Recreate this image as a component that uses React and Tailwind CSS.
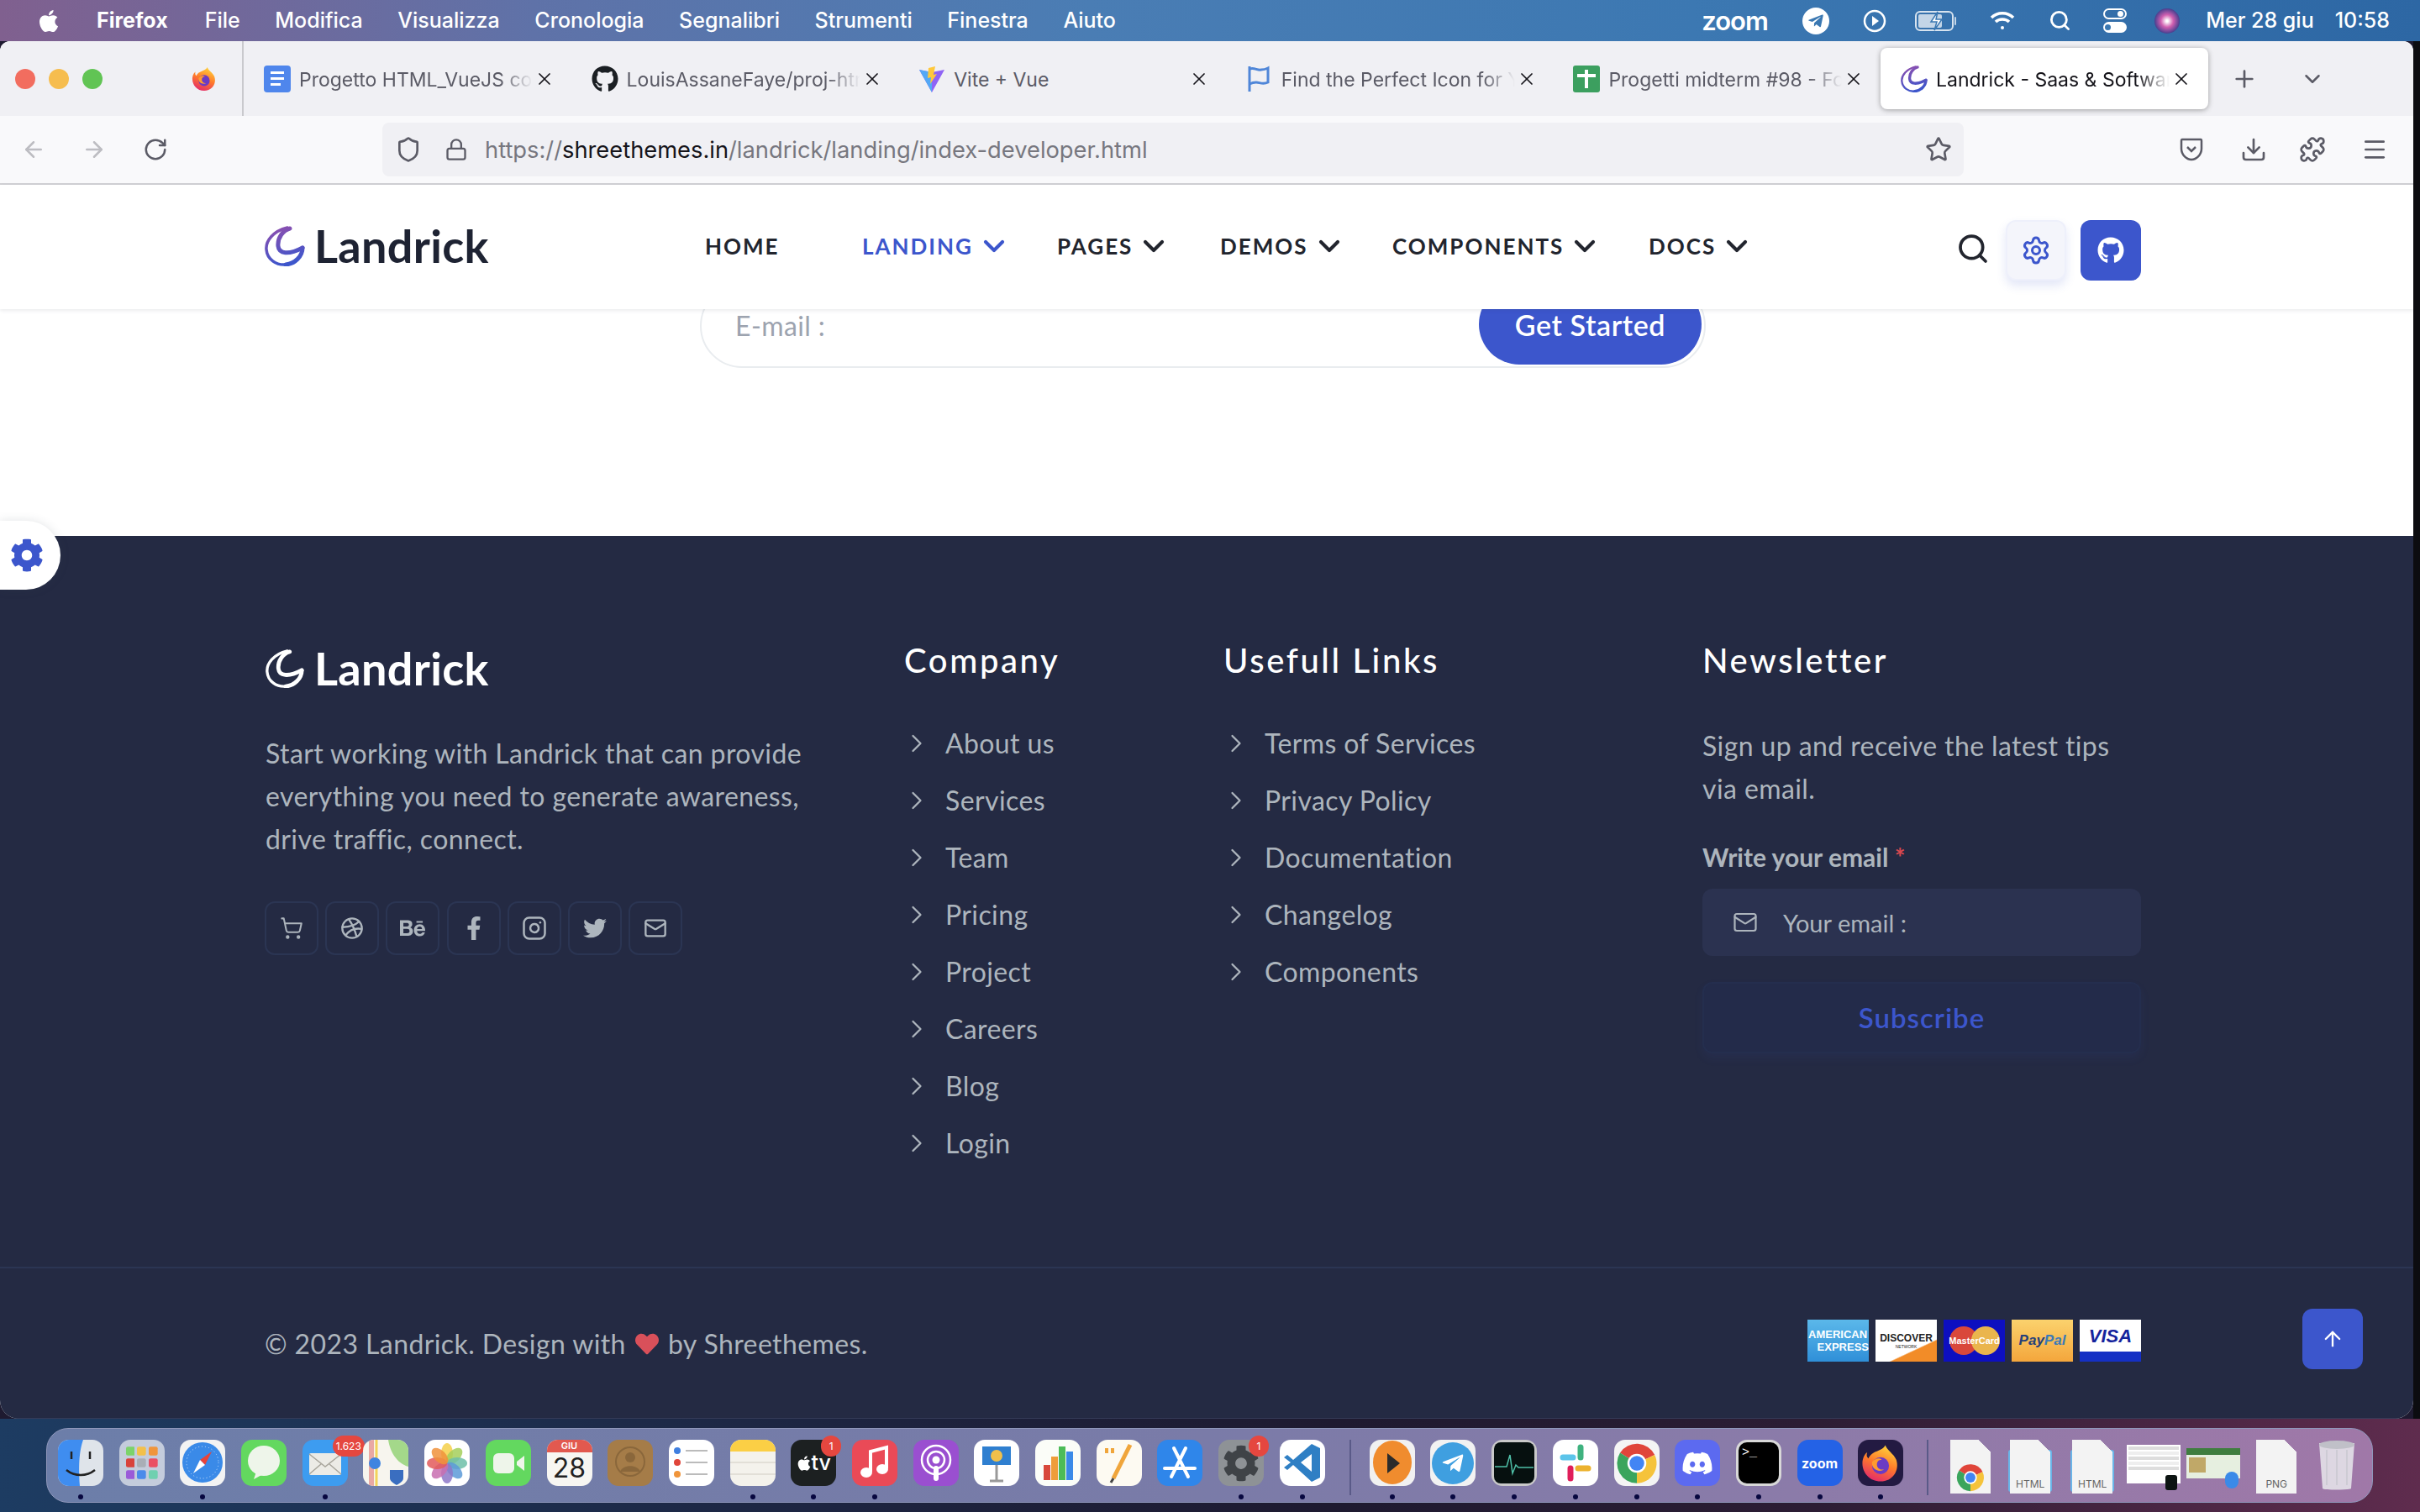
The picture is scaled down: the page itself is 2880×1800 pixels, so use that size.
import { ArrowUp, ChevronDown, ChevronRight, Menu, Plus, RotateCw, Search, Settings, ShoppingCart, X, ArrowLeft, ArrowRight, Star, Download, Puzzle, Lock, Shield, Mail, Instagram, Dribbble } from 'lucide-react';
import { FaApple, FaBehance, FaCog, FaDiscord, FaFacebookF, FaGithub, FaHeart, FaTelegramPlane, FaTwitter } from 'react-icons/fa';

const menus = ['File', 'Modifica', 'Visualizza', 'Cronologia', 'Segnalibri', 'Strumenti', 'Finestra', 'Aiuto'];

const nav = [
  { label: 'HOME', width: 'w-[187px]' },
  { label: 'LANDING', width: 'w-[232px]', active: true, caret: true },
  { label: 'PAGES', width: 'w-[194px]', caret: true },
  { label: 'DEMOS', width: 'w-[205px]', caret: true },
  { label: 'COMPONENTS', width: 'w-[305px]', caret: true },
  { label: 'DOCS', width: 'w-[140px]', caret: true },
];

const company = ['About us', 'Services', 'Team', 'Pricing', 'Project', 'Careers', 'Blog', 'Login'];
const usefull = ['Terms of Services', 'Privacy Policy', 'Documentation', 'Changelog', 'Components'];

function LandrickMark({ id, light, className }) {
  const stroke = light ? '#ffffff' : `url(#${id})`;
  return (
    <svg viewBox="0 0 48 48" className={className} fill="none">
      <defs>
        <linearGradient id={id} gradientUnits="userSpaceOnUse" x1="14" y1="2" x2="26" y2="46">
          <stop offset="0" stopColor="#8a4fb0" />
          <stop offset="1" stopColor="#3c56cc" />
        </linearGradient>
      </defs>
      <path d="M30 3c-8 2-15 11-14 21 1 9 12 11 29 2" stroke={stroke} strokeWidth="5" strokeLinecap="round" />
      <path d="M45 26c0 10-9 19-20 20" stroke={stroke} strokeWidth="5" strokeLinecap="round" />
      <path d="M27 2C10 6 1 18 2 28c1 12 12 19 23 18" stroke={stroke} strokeWidth="3.500" strokeLinecap="round" />
    </svg>
  );
}

function FirefoxIcon({ className }) {
  return (
    <svg viewBox="0 0 32 32" className={className}>
      <defs>
        <linearGradient id="ffx" x1="0.7" y1="0" x2="0.3" y2="1">
          <stop offset="0" stopColor="#ffd43b" />
          <stop offset="0.5" stopColor="#ff7a2a" />
          <stop offset="1" stopColor="#e3286d" />
        </linearGradient>
      </defs>
      <path d="M20 1c1 4 7 7 9 12 3 9-3 18-13 18C7 31 1 24 1 16c0-4 2-8 4-9-1 3 0 4 1 5 1-3 4-5 7-6 3-1 6-3 7-5z" fill="url(#ffx)" />
      <circle cx="16" cy="18" r="7" fill="#6b3bc4" />
      <path d="M9 15c2-3 6-4 8-2-3 0-4 2-4 4 0 3 3 5 6 4-4 3-11 0-10-6z" fill="#ff9b2e" />
    </svg>
  );
}

function TabIcon({ kind }) {
  if (kind === 'docs') {
    return (
      <div className="flex h-[32px] w-[32px] flex-col items-start justify-center gap-[4px] rounded-[4px] bg-[#4f86ec] pl-[8px]">
        <div className="h-[3px] w-[16px] bg-white" />
        <div className="h-[3px] w-[16px] bg-white" />
        <div className="h-[3px] w-[12px] bg-white" />
      </div>
    );
  }
  if (kind === 'github') return <FaGithub className="h-[32px] w-[32px] text-[#1b1f23]" />;
  if (kind === 'vite') {
    return (
      <svg viewBox="0 0 32 32" className="h-[32px] w-[32px]">
        <path d="M1 5l15 3 15-3-15 27z" fill="#8f63f5" />
        <path d="M1 5l15 3v24z" fill="#53a8f5" />
        <path d="M20 1l-8 2-1 12 4-1-1 8 8-12-4 1z" fill="#ffc83a" />
      </svg>
    );
  }
  if (kind === 'flag') {
    return (
      <svg viewBox="0 0 32 32" className="h-[32px] w-[32px]" fill="none" stroke="#4f86d8" strokeWidth="3">
        <path d="M4 1v30" />
        <path d="M4 4c6-2 9 2 14 1 3 0 6-1 8-2v17c-6 3-10 0-14 0-3 0-6 1-8 2" />
      </svg>
    );
  }
  if (kind === 'sheets') {
    return (
      <div className="flex h-[32px] w-[32px] items-center justify-center rounded-[3px] bg-[#3c9f5f]">
        <div className="relative h-[22px] w-[22px]">
          <div className="absolute left-[9px] top-0 h-full w-[4px] bg-white" />
          <div className="absolute left-0 top-[5px] h-[4px] w-full bg-white" />
        </div>
      </div>
    );
  }
  return <LandrickMark id="fav" className="h-[32px] w-[32px]" />;
}

const tabs = [
  { kind: 'docs', title: 'Progetto HTML_VueJS con Vue', fade: true },
  { kind: 'github', title: 'LouisAssaneFaye/proj-html-vue', fade: true },
  { kind: 'vite', title: 'Vite + Vue' },
  { kind: 'flag', title: 'Find the Perfect Icon for Your', fade: true },
  { kind: 'sheets', title: 'Progetti midterm #98 - Foglio', fade: true },
  { kind: 'landrick', title: 'Landrick - Saas & Software La', fade: true, active: true },
];

function MenuBar() {
  return (
    <div className="flex h-[49px] items-center bg-[linear-gradient(90deg,#80608f_0%,#5f72a8_22%,#4a7db4_45%,#3c78b2_70%,#2d67a4_100%)] font-['Inter',sans-serif] text-[25px] font-medium text-white">
      <FaApple className="ml-[44px] h-[30px] w-[28px]" />
      <span className="ml-[43px] font-bold">Firefox</span>
      <div className="ml-[44px] flex gap-[41.6px]">
        {menus.map((m) => (
          <span key={m}>{m}</span>
        ))}
      </div>
      <div className="ml-auto flex items-center">
        <span className="w-[84px] text-[31px] leading-none font-semibold tracking-[-1px]">zoom</span>
        <div className="ml-[36px] flex h-[32px] w-[32px] items-center justify-center rounded-full bg-white text-[#3b78b2]">
          <FaTelegramPlane className="h-[20px] w-[20px]" />
        </div>
        <svg viewBox="0 0 28 28" className="ml-[40px] h-[28px] w-[28px]" fill="none" stroke="white" strokeWidth="2.500">
          <circle cx="14" cy="14" r="12" />
          <path d="M11 8l8 6-8 6z" fill="white" stroke="none" />
        </svg>
        <svg viewBox="0 0 52 26" className="ml-[34px] h-[26px] w-[52px]" fill="none" stroke="white" strokeWidth="2">
          <rect x="1" y="2" width="44" height="22" rx="5" opacity="0.8" />
          <rect x="4" y="5" width="28" height="16" rx="2" fill="white" stroke="none" opacity="0.7" />
          <path d="M27 2l-8 12h7l-3 10 9-13h-7z" fill="white" stroke="#3b78b2" strokeWidth="1.500" />
          <path d="M48 9v8" strokeLinecap="round" opacity="0.7" />
        </svg>
        <svg viewBox="0 0 30 24" className="ml-[37px] h-[24px] w-[30px]" fill="none" stroke="white" strokeWidth="3.500">
          <path d="M2 8c7-7 19-7 26 0" />
          <path d="M7 13c4-4 12-4 16 0" />
          <circle cx="15" cy="20" r="2" fill="white" stroke="none" />
        </svg>
        <Search className="ml-[40px] h-[27px] w-[27px]" strokeWidth={2.5} />
        <div className="ml-[38px] flex w-[28px] flex-col gap-[3px]">
          <div className="flex h-[13px] items-center justify-end rounded-full border-2 border-white px-[2px]"><div className="h-[7px] w-[7px] rounded-full bg-white" /></div>
          <div className="flex h-[13px] items-center rounded-full bg-white px-[2px]"><div className="h-[7px] w-[7px] rounded-full bg-[#3b78b2]" /></div>
        </div>
        <div className="ml-[33px] flex h-[30px] w-[30px] items-center justify-center rounded-full bg-[radial-gradient(circle,#ffffff_5%,#d05fb0_35%,#4a3f8f_70%,#1d2a50_100%)]" />
        <span className="ml-[31px] whitespace-nowrap">Mer 28 giu</span>
        <span className="ml-[25px] mr-[36px] whitespace-nowrap">10:58</span>
      </div>
    </div>
  );
}

function TabBar() {
  return (
    <div className="flex h-[89px] items-center bg-[#f0f0f4] font-['Inter',sans-serif] text-[23px]">
      <div className="flex h-full w-[290px] shrink-0 items-center border-r-2 border-[#c9c9cd] pl-[18px]">
        <div className="h-[24px] w-[24px] rounded-full bg-[#f26d5f]" />
        <div className="ml-[16px] h-[24px] w-[24px] rounded-full bg-[#f6bd4f]" />
        <div className="ml-[16px] h-[24px] w-[24px] rounded-full bg-[#61c454]" />
        <FirefoxIcon className="ml-[106px] h-[32px] w-[30px]" />
      </div>
      {tabs.map((tab) => (
        <div key={tab.title} className="w-[389.6px] shrink-0">
          <div className={`flex h-[73px] items-center rounded-[8px] pl-[16px] ${tab.active ? 'bg-white shadow-[0_1px_6px_rgba(0,0,0,0.35)] text-[#15141a]' : 'text-[#5b5b66]'}`}>
            <div className="ml-[8px] shrink-0"><TabIcon kind={tab.kind} /></div>
            <div className={`ml-[10px] w-[278px] overflow-hidden pt-[4px] whitespace-nowrap ${tab.fade ? '[mask-image:linear-gradient(to_right,black_86%,transparent)]' : ''}`}>
              {tab.title}
            </div>
            <X className="ml-[2px] h-[24px] w-[24px] shrink-0 text-[#15141a]" strokeWidth={1.75} />
          </div>
        </div>
      ))}
      <Plus className="ml-[27px] h-[32px] w-[32px] text-[#5b5b66]" strokeWidth={2} />
      <ChevronDown className="ml-[50px] h-[30px] w-[30px] text-[#5b5b66]" strokeWidth={2} />
    </div>
  );
}

function Toolbar() {
  return (
    <div className="flex h-[82px] items-center border-b-2 border-[#d0d0d4] bg-[#f9f9fb] text-[#5b5b66]">
      <ArrowLeft className="ml-[25px] h-[30px] w-[30px] text-[#bdbdc2]" strokeWidth={2} />
      <ArrowRight className="ml-[42px] h-[30px] w-[30px] text-[#bdbdc2]" strokeWidth={2} />
      <RotateCw className="ml-[43px] h-[30px] w-[30px]" strokeWidth={2} />
      <div className="ml-[255px] flex h-[64px] w-[1882px] items-center rounded-[8px] bg-[#f0f0f4]">
        <Shield className="ml-[15px] h-[32px] w-[32px]" strokeWidth={2} />
        <Lock className="ml-[27px] h-[32px] w-[28px]" strokeWidth={2} />
        <div className="ml-[20px] pt-[2px] font-['Inter',sans-serif] text-[27.3px] whitespace-nowrap text-[#77777f]">
          https://<span className="text-[#15141a]">shreethemes.in</span>/landrick/landing/index-developer.html
        </div>
        <Star className="ml-auto mr-[14px] h-[32px] w-[32px]" strokeWidth={2} />
      </div>
      <svg viewBox="0 0 28 30" className="ml-[257px] h-[30px] w-[28px]" fill="none" stroke="#5b5b66" strokeWidth="2.500">
        <path d="M3 3h22c1 0 1 1 1 2v9c0 7-6 13-12 13S2 21 2 14V5c0-1 0-2 1-2z" />
        <path d="M9 12l5 5 5-5" />
      </svg>
      <Download className="ml-[44px] h-[32px] w-[32px]" strokeWidth={2} />
      <Puzzle className="ml-[38px] h-[32px] w-[32px]" strokeWidth={2} />
      <Menu className="ml-[42px] h-[32px] w-[32px]" strokeWidth={2} />
    </div>
  );
}

function SiteHeader() {
  return (
    <div className="relative z-10 flex h-[148px] items-center bg-white pl-[315px] shadow-[0_2px_4px_rgba(60,72,88,0.1)] font-['Lato',sans-serif]">
      <div className="-mt-[2px] flex w-[524px] items-center">
        <LandrickMark id="logoDark" className="h-[48px] w-[48px]" />
        <span className="ml-[11px] text-[54px] leading-none font-bold tracking-[0.3px] text-[#1e2333]">Landrick</span>
      </div>
      {nav.map((item) => (
        <div key={item.label} className={`-mt-[2px] flex items-center ${item.width} text-[26px] font-bold tracking-[2px] ${item.active ? 'text-[#3c56cc]' : 'text-[#22252e]'}`}>
          <span>{item.label}</span>
          {item.caret && <ChevronDown className="ml-[5px] h-[40px] w-[40px]" strokeWidth={2.5} />}
        </div>
      ))}
      <Search className="ml-[226px] mt-[4px] h-[40px] w-[40px] text-[#22252e]" strokeWidth={2.25} />
      <div className="ml-[19px] mt-[7px] flex h-[72px] w-[72px] items-center justify-center rounded-[12px] border-2 border-[#eef0fb] bg-[#f4f5fb] shadow-[0_6px_12px_rgba(60,86,204,0.15)]">
        <Settings className="h-[36px] w-[36px] text-[#3c56cc]" strokeWidth={2} />
      </div>
      <div className="ml-[17px] mt-[7px] flex h-[72px] w-[72px] items-center justify-center rounded-[12px] bg-[#3c56cc]">
        <FaGithub className="h-[32px] w-[32px] text-white" />
      </div>
    </div>
  );
}

function LinkColumn({ title, links, width }) {
  return (
    <div className={width}>
      <h5 className="h-[56px] text-[40px] leading-[56px] font-medium tracking-[2.6px] text-white">{title}</h5>
      <ul className="mt-[37px]">
        {links.map((link) => (
          <li key={link} className="flex h-[68px] items-center text-[32px] tracking-[0.4px] text-[#adb5bd]">
            <ChevronRight className="-ml-[3px] h-[36px] w-[36px]" strokeWidth={1.5} />
            <span className="ml-[16px]">{link}</span>
          </li>
        ))}
      </ul>
    </div>
  );
}

function SocialButton({ children }) {
  return (
    <div className="flex h-[64px] w-[64px] items-center justify-center rounded-[12px] border-2 border-[#2b3553] text-[#adb5bd]">
      {children}
    </div>
  );
}

function PaymentCards() {
  return (
    <div className="flex gap-[8px] font-['Liberation_Sans',sans-serif]">
      <div className="flex h-[50px] w-[73px] flex-col justify-center bg-[linear-gradient(180deg,#5bb8ea,#2f8fd8)] text-[13px] leading-[15px] font-bold text-white">
        <span className="pl-[1px]">AMERICAN</span>
        <span className="text-right">EXPRESS</span>
      </div>
      <div className="flex h-[50px] w-[73px] flex-col items-center justify-center bg-[linear-gradient(155deg,#ffffff_68%,#f28c28_70%)] text-[12px] leading-[14px] font-bold text-[#222]">
        <span>DISCOVER</span>
        <span className="text-[5px] leading-[6px] font-normal">NETWORK</span>
      </div>
      <div className="relative flex h-[50px] w-[73px] items-center justify-center bg-[#0d0fc0]">
        <div className="h-[34px] w-[34px] rounded-full bg-[#d9483b]" />
        <div className="-ml-[8px] h-[34px] w-[34px] rounded-full bg-[#eab54d]" />
        <span className="absolute text-[11px] font-bold text-white">MasterCard</span>
      </div>
      <div className="flex h-[50px] w-[73px] items-center justify-center bg-[linear-gradient(180deg,#fbd26d,#f4a63c)] text-[17px] font-bold italic">
        <span className="text-[#25407a]">Pay</span><span className="text-[#3a7ab8]">Pal</span>
      </div>
      <div className="flex h-[50px] w-[73px] flex-col overflow-hidden bg-white">
        <span className="flex h-[38px] items-center justify-center text-[22px] font-bold italic text-[#15249c]">VISA</span>
        <div className="h-[12px] bg-[#1530c4]" />
      </div>
    </div>
  );
}

function Footer() {
  return (
    <div className="relative h-[1052px] border-b-2 border-[#353b58] bg-[#242a43] font-['Lato',sans-serif]">
      <div className="flex h-[870px] pl-[315px] pt-[120px]">
        <div className="w-[761px]">
          <div className="mt-[11px] flex items-center">
            <LandrickMark id="logoLight" light className="h-[46px] w-[48px]" />
            <span className="ml-[11px] text-[54px] leading-none font-bold tracking-[0.3px] text-white">Landrick</span>
          </div>
          <p className="mt-[48px] w-[660px] pl-[1px] text-[32px] leading-[51.2px] tracking-[0.4px] text-[#adb5bd]">
            Start working with Landrick that can provide everything you need to generate awareness, drive traffic, connect.
          </p>
          <div className="mt-[48px] flex gap-[8.2px]">
            <SocialButton><ShoppingCart className="h-[28px] w-[28px]" strokeWidth={1.75} /></SocialButton>
            <SocialButton><Dribbble className="h-[28px] w-[28px]" strokeWidth={2} /></SocialButton>
            <SocialButton><FaBehance className="h-[28px] w-[30px]" /></SocialButton>
            <SocialButton><FaFacebookF className="h-[28px] w-[28px]" /></SocialButton>
            <SocialButton><Instagram className="h-[30px] w-[30px]" strokeWidth={2} /></SocialButton>
            <SocialButton><FaTwitter className="h-[28px] w-[28px]" /></SocialButton>
            <SocialButton><Mail className="h-[28px] w-[28px]" strokeWidth={2} /></SocialButton>
          </div>
        </div>
        <LinkColumn title="Company" links={company} width="w-[380px]" />
        <LinkColumn title="Usefull Links" links={usefull} width="w-[570px]" />
        <div className="w-[522px]">
          <h5 className="h-[56px] text-[40px] leading-[56px] font-medium tracking-[2.6px] text-white">Newsletter</h5>
          <p className="mt-[48px] w-[500px] text-[32px] leading-[51.2px] tracking-[0.4px] text-[#adb5bd]">Sign up and receive the latest tips via email.</p>
          <div className="mt-[35px] text-[30px] leading-[42px] font-bold text-[#adb5bd]">
            Write your email <span className="text-[#d9484f]">*</span>
          </div>
          <div className="mt-[17px] flex h-[80px] items-center rounded-[12px] bg-[#2b3250] text-[29px] text-[#adb5bd]">
            <Mail className="ml-[36px] h-[30px] w-[30px]" strokeWidth={1.75} />
            <span className="ml-[30px]">Your email :</span>
          </div>
          <div className="mt-[31px] flex h-[85px] items-center justify-center rounded-[12px] border-2 border-[#242e4e] bg-[#232b4a] text-[33px] font-semibold tracking-[1px] text-[#3c56cc] shadow-[0_6px_12px_rgba(60,86,204,0.08)]">
            Subscribe
          </div>
        </div>
      </div>
      <div className="flex h-[182px] items-center justify-between border-t-2 border-[#2b3553] pl-[315px] pr-[324px]">
        <div className="flex items-center text-[32px] tracking-[0.4px] text-[#adb5bd]">
          © 2023 Landrick. Design with <FaHeart className="mx-[11px] h-[28px] w-[28px] text-[#d9505a]" /> by Shreethemes.
        </div>
        <div className="-mt-[8px]"><PaymentCards /></div>
      </div>
      <div className="absolute bottom-[58px] right-[60px] flex h-[72px] w-[72px] items-center justify-center rounded-[12px] bg-[#3c56cc]">
        <ArrowUp className="h-[28px] w-[28px] text-white" strokeWidth={2} />
      </div>
    </div>
  );
}

const box = 'relative h-[55px] w-[54px] overflow-hidden rounded-[13px]';

function Finder() {
  return (
    <svg viewBox="0 0 54 55" className={box}>
      <rect width="54" height="55" fill="#dfe4ea" />
      <path d="M0 0h30c-4 12-6 26-4 55H0z" fill="#3f8df0" />
      <path d="M16 14v9M38 14v9" stroke="#222" strokeWidth="2.500" />
      <path d="M10 36c10 8 24 8 34 0" stroke="#222" strokeWidth="2.500" fill="none" />
    </svg>
  );
}

function Launchpad() {
  const colors = ['#7cd36b', '#f3c04b', '#f0953b', '#d8423c', '#a9aeb6', '#ea4f63', '#9a5bd8', '#4b8bea', '#6fd0b0'];
  return (
    <div className={`${box} grid grid-cols-3 gap-[3px] bg-[#c4ccdc] p-[8px]`}>
      {colors.map((c, i) => (
        <svg key={i} viewBox="0 0 10 10" className="h-full w-full"><rect width="10" height="10" rx="2" fill={c} /></svg>
      ))}
    </div>
  );
}

function Petals() {
  const colors = ['#f5d04a', '#a4cf5a', '#6fc0a8', '#5c9ad8', '#8d78c8', '#c86fb0', '#e35b5b', '#f0923b'];
  return (
    <svg viewBox="0 0 54 55" className={box}>
      <rect width="54" height="55" fill="#ffffff" />
      {colors.map((c, i) => (
        <ellipse key={c} cx="27" cy="16" rx="7" ry="12" fill={c} opacity="0.85" transform={`rotate(${i * 45} 27 28)`} />
      ))}
    </svg>
  );
}

function Chrome({ size = 'h-[40px] w-[40px]' }) {
  return (
    <svg viewBox="0 0 40 40" className={size}>
      <path d="M20 20L4 10a19 19 0 0 1 33 2z" fill="#e0453a" />
      <path d="M20 20L37 12a19 19 0 0 1-17 27z" fill="#f5c33b" />
      <path d="M20 20v19A19 19 0 0 1 4 10z" fill="#3ba55d" />
      <circle cx="20" cy="20" r="9" fill="#fff" />
      <circle cx="20" cy="20" r="7" fill="#4285f4" />
    </svg>
  );
}

const icons = {
  finder: <Finder />,
  launchpad: <Launchpad />,
  safari: (
    <svg viewBox="0 0 54 55" className={box}>
      <rect width="54" height="55" fill="#f3f3f3" />
      <circle cx="27" cy="27" r="24" fill="#3a8ae8" />
      <circle cx="27" cy="27" r="19" fill="none" stroke="#cfe3fa" strokeWidth="1" strokeDasharray="1 3" />
      <path d="M38 14L24 24l6 6z" fill="#e8433a" />
      <path d="M16 40l8-16 6 6z" fill="#fff" />
    </svg>
  ),
  messages: (
    <svg viewBox="0 0 54 55" className={box}>
      <rect width="54" height="55" fill="#63d85f" />
      <ellipse cx="27" cy="25" rx="19" ry="18" fill="#eef5ea" />
      <path d="M18 38l-3 9 11-6z" fill="#eef5ea" />
    </svg>
  ),
  mail: (
    <svg viewBox="0 0 54 55" className={box}>
      <rect width="54" height="55" fill="#3d9cf0" />
      <rect x="8" y="16" width="38" height="26" rx="2" fill="#ecebe6" />
      <path d="M8 17l19 15 19-15M8 41l14-12M46 41L32 29" stroke="#a8a59c" strokeWidth="1.500" fill="none" />
    </svg>
  ),
  maps: (
    <svg viewBox="0 0 54 55" className={box}>
      <rect width="54" height="55" fill="#f7f5ee" />
      <path d="M30 0h24v32C40 28 32 14 30 0z" fill="#a4d88a" />
      <path d="M10 0v55" stroke="#e9a9a4" strokeWidth="6" />
      <path d="M16 0v55" stroke="#f3d35a" strokeWidth="3" />
      <circle cx="14" cy="28" r="7" fill="#3f84e0" />
      <path d="M32 36h16v10c0 4-8 8-8 8s-8-4-8-8z" fill="#3a6ec0" />
    </svg>
  ),
  photos: <Petals />,
  facetime: (
    <svg viewBox="0 0 54 55" className={box}>
      <rect width="54" height="55" fill="#63d85f" />
      <rect x="9" y="16" width="25" height="24" rx="6" fill="#eef5ea" />
      <path d="M37 26l9-7v18l-9-7z" fill="#eef5ea" />
    </svg>
  ),
  calendar: (
    <div className={`${box} flex flex-col items-center bg-[#f7f6f2] font-['Inter',sans-serif]`}>
      <div className="flex h-[15px] w-full items-center justify-center bg-[#e2594f] text-[11px] font-semibold text-white">GIU</div>
      <div className="text-[32px] leading-[38px] text-[#222]">28</div>
    </div>
  ),
  contacts: (
    <svg viewBox="0 0 54 55" className={box}>
      <rect width="54" height="55" fill="#a57c48" />
      <circle cx="27" cy="26" r="17" fill="none" stroke="#8a673b" strokeWidth="2" />
      <circle cx="27" cy="21" r="6" fill="#8a673b" />
      <path d="M15 38c3-9 21-9 24 0" fill="#8a673b" />
    </svg>
  ),
  reminders: (
    <svg viewBox="0 0 54 55" className={box}>
      <rect width="54" height="55" fill="#fff" />
      <circle cx="10" cy="13" r="4" fill="#3f7fe0" />
      <circle cx="10" cy="27" r="4" fill="#e0453a" />
      <circle cx="10" cy="41" r="4" fill="#f0953b" />
      <path d="M20 13h26M20 27h26M20 41h26" stroke="#bbb" strokeWidth="2" />
    </svg>
  ),
  notes: (
    <svg viewBox="0 0 54 55" className={box}>
      <rect width="54" height="55" fill="#f4f2ec" />
      <rect width="54" height="14" fill="#fbcf45" />
      <path d="M0 27h54M0 41h54" stroke="#dcd9d0" strokeWidth="1.500" />
    </svg>
  ),
  tv: (
    <div className={`${box} flex items-center justify-center bg-[#1c2021] font-['Inter',sans-serif] text-[25px] font-medium text-white`}>
      <FaApple className="h-[20px] w-[18px]" />
      <span>tv</span>
    </div>
  ),
  music: (
    <svg viewBox="0 0 54 55" className={box}>
      <rect width="54" height="55" fill="#ea4a57" />
      <path d="M22 38V14l19-5v25" fill="none" stroke="#fff" strokeWidth="4" />
      <ellipse cx="17" cy="39" rx="7" ry="6" fill="#fff" />
      <ellipse cx="36" cy="35" rx="7" ry="6" fill="#fff" />
    </svg>
  ),
  podcasts: (
    <svg viewBox="0 0 54 55" className={box}>
      <rect width="54" height="55" fill="#9a4fd0" />
      <circle cx="27" cy="24" r="17" fill="none" stroke="#fff" strokeWidth="2.500" />
      <circle cx="27" cy="24" r="10" fill="none" stroke="#fff" strokeWidth="2.500" />
      <circle cx="27" cy="24" r="4.500" fill="#fff" />
      <rect x="24" y="31" width="6" height="18" rx="3" fill="#fff" />
    </svg>
  ),
  keynote: (
    <svg viewBox="0 0 54 55" className={box}>
      <rect width="54" height="55" fill="#fff" />
      <rect x="10" y="8" width="34" height="22" fill="#2f7fd0" />
      <circle cx="27" cy="19" r="7" fill="#f0c04b" />
      <path d="M27 30v18M19 49h16" stroke="#999" strokeWidth="3" />
    </svg>
  ),
  numbers: (
    <svg viewBox="0 0 54 55" className={box}>
      <rect width="54" height="55" fill="#fbfdf8" />
      <rect x="10" y="30" width="8" height="18" fill="#d8483b" />
      <rect x="19" y="20" width="8" height="28" fill="#ef9d3a" />
      <rect x="28" y="8" width="8" height="40" fill="#4cbc58" />
      <rect x="37" y="14" width="8" height="34" fill="#3a8ae8" />
    </svg>
  ),
  pages: (
    <svg viewBox="0 0 54 55" className={box}>
      <rect width="54" height="55" fill="#fdfaf2" />
      <path d="M40 6L20 46" stroke="#f0a53b" strokeWidth="5" />
      <path d="M20 46l-3 5" stroke="#444" strokeWidth="3" />
      <path d="M10 10h4v6h-4zM17 10h4v6h-4z" fill="#f0a53b" />
    </svg>
  ),
  appstore: (
    <svg viewBox="0 0 54 55" className={box}>
      <rect width="54" height="55" fill="#2f86ea" />
      <path d="M34 10L17 44M20 10l17 34M9 34h36" stroke="#fff" strokeWidth="4" strokeLinecap="round" />
    </svg>
  ),
  prefs: (
    <div className={`${box} flex items-center justify-center bg-[#8e9296]`}>
      <FaCog className="h-[44px] w-[44px] text-[#3f4347]" />
    </div>
  ),
  vscode: (
    <svg viewBox="0 0 54 55" className={box}>
      <rect width="54" height="55" fill="#fff" />
      <path d="M38 5l10 5v35l-10 5L16 30l-7 6-4-3 8-6-8-6 4-3 7 6z" fill="#2f7fc4" />
      <path d="M38 17L25 27l13 11z" fill="#fff" />
    </svg>
  ),
  player: (
    <svg viewBox="0 0 54 55" className={box}>
      <rect width="54" height="55" fill="#f1f1f1" />
      <ellipse cx="27" cy="27" rx="23" ry="26" fill="#f08c2e" />
      <path d="M21 16l15 12-15 12z" fill="#2b2b2b" />
    </svg>
  ),
  telegram: (
    <div className={`${box} flex items-center justify-center bg-[#f2f2f2]`}>
      <div className="flex h-[50px] w-[50px] items-center justify-center rounded-full bg-[#3f9fe0]">
        <FaTelegramPlane className="h-[28px] w-[28px] text-white" />
      </div>
    </div>
  ),
  activity: (
    <svg viewBox="0 0 54 55" className={box}>
      <rect width="54" height="55" fill="#c9c9c9" />
      <rect x="3" y="3" width="48" height="49" rx="8" fill="#06100f" />
      <path d="M4 32h14l4-14 3 22 4-10 3 3h18" stroke="#4fc0a8" strokeWidth="1.500" fill="none" />
    </svg>
  ),
  slack: (
    <svg viewBox="0 0 54 55" className={box}>
      <rect width="54" height="55" fill="#fff" />
      <path d="M12 21h12" stroke="#5cc4ea" strokeWidth="7" strokeLinecap="round" />
      <path d="M33 9v12" stroke="#3fb27f" strokeWidth="7" strokeLinecap="round" />
      <path d="M30 34h12" stroke="#ecb22e" strokeWidth="7" strokeLinecap="round" />
      <path d="M21 34v12" stroke="#e01e5a" strokeWidth="7" strokeLinecap="round" />
    </svg>
  ),
  chrome: (
    <div className={`${box} flex items-center justify-center bg-[#f4f4f4]`}><Chrome size="h-[50px] w-[50px]" /></div>
  ),
  discord: (
    <div className={`${box} flex items-center justify-center bg-[#5c6af0]`}>
      <FaDiscord className="h-[38px] w-[38px] text-white" />
    </div>
  ),
  terminal: (
    <div className={`${box} border-[3px] border-[#d8d8d8] bg-black p-[4px] font-['Liberation_Mono',monospace] text-[15px] leading-[18px] text-white`}>
      &gt;_
    </div>
  ),
  zoom: (
    <div className={`${box} flex items-center justify-center bg-[#2462e6] font-['Inter',sans-serif] text-[16px] font-bold text-white`}>zoom</div>
  ),
  firefox: (
    <div className={`${box} flex items-center justify-center bg-[#231a42]`}><FirefoxIcon className="h-[46px] w-[46px]" /></div>
  ),
};

const dockFirst = [
  { id: 'finder', on: true }, { id: 'launchpad' }, { id: 'safari', on: true }, { id: 'messages' },
  { id: 'mail', on: true, badge: '1.623' }, { id: 'maps' }, { id: 'photos' }, { id: 'facetime' },
  { id: 'calendar' }, { id: 'contacts' }, { id: 'reminders' }, { id: 'notes', on: true },
  { id: 'tv', on: true, badge: '1' }, { id: 'music', on: true }, { id: 'podcasts' }, { id: 'keynote' },
  { id: 'numbers' }, { id: 'pages' }, { id: 'appstore' }, { id: 'prefs', on: true, badge: '1' }, { id: 'vscode', on: true },
];
const dockSecond = ['player', 'telegram', 'activity', 'slack', 'chrome', 'discord', 'terminal', 'zoom', 'firefox'];

function DockItem({ id, on, badge }) {
  return (
    <div className="relative flex w-[54px] shrink-0 flex-col items-center">
      {icons[id]}
      <div className={`mt-[10px] h-[6px] w-[6px] rounded-full ${on ? 'bg-[#07073f]' : ''}`} />
      {badge && (
        <div className={`absolute -top-[5px] flex h-[25px] items-center justify-center rounded-full bg-[#e5473f] font-['Inter',sans-serif] text-[12px] text-white ${badge === '1' ? '-right-[6px] w-[24px]' : '-right-[20px] w-[38px]'}`}>
          {badge}
        </div>
      )}
    </div>
  );
}

function FileDoc({ chrome, label, folder }) {
  return (
    <div className="relative h-[64px] w-[48px]">
      {folder && <div className="absolute bottom-[2px] -left-[2px] h-[50px] w-[52px] rounded-[3px] bg-[#69b5e8]" />}
      <div className="absolute inset-0 flex flex-col items-center justify-end bg-[linear-gradient(225deg,transparent_10px,#f3f3f3_10px)] pb-[2px] font-['Inter',sans-serif] text-[12px] text-[#666]">
        {chrome && <Chrome size="h-[34px] w-[34px]" />}
        {label && <span>{label}</span>}
      </div>
    </div>
  );
}

function Dock() {
  return (
    <div className="flex h-[111px] bg-[linear-gradient(90deg,#1d3c62_0%,#1d2440_35%,#1e1a30_55%,#2c1d34_75%,#5f2c4e_100%)] pt-[11px]">
      <div className="ml-[55px] flex h-[89px] w-[2769px] items-start rounded-[26px] border border-[#8f97bb] bg-[linear-gradient(90deg,#6c7ea9_0%,#7a7ba8_50%,#8b7ba9_75%,#a078a8_100%)] pl-[13px] pt-[13px]">
        <div className="flex gap-[18.7px]">
          {dockFirst.map((d) => (
            <DockItem key={d.id} {...d} />
          ))}
        </div>
        <div className="ml-[29px] mr-[22px] h-[66px] w-[2px] bg-[#5a5a88]" />
        <div className="flex gap-[18.7px]">
          {dockSecond.map((id) => (
            <DockItem key={id} id={id} on />
          ))}
        </div>
        <div className="ml-[28px] mr-[26px] h-[66px] w-[2px] bg-[#5a5a88]" />
        <div className="flex items-start">
          <FileDoc chrome />
          <div className="ml-[23px]"><FileDoc label="HTML" folder /></div>
          <div className="ml-[26px]"><FileDoc label="HTML" folder /></div>
          <div className="relative ml-[17px] mt-[6px] h-[46px] w-[64px]">
            <div className="flex h-full flex-col gap-[2px] bg-white p-[2px]">
              <div className="h-[4px] bg-[#ddd]" />
              <div className="h-[4px] bg-[#eee]" />
              <div className="h-[4px] bg-[#ddd]" />
              <div className="h-[4px] bg-[#eee]" />
              <div className="h-[4px] bg-[#ddd]" />
            </div>
            <div className="absolute -bottom-[8px] right-[4px] h-[18px] w-[14px] rounded-[3px] bg-[#0c1412]" />
          </div>
          <div className="relative ml-[7px] mt-[10px] h-[36px] w-[64px] bg-[#e6efe0]">
            <div className="h-[8px] bg-[#3f7d3f]" />
            <div className="m-[3px] h-[18px] w-[20px] bg-[#c0a868]" />
            <div className="absolute -bottom-[12px] right-[2px] h-[20px] w-[16px] rounded-full bg-[#3a8ae8]" />
          </div>
          <div className="ml-[19px]"><FileDoc label="PNG" /></div>
          <svg viewBox="0 0 50 62" className="ml-[23px] h-[62px] w-[50px]">
            <path d="M4 4h42l-4 54c0 2-34 2-34 0z" fill="#e8e8ec" opacity="0.85" />
            <ellipse cx="25" cy="6" rx="21" ry="5" fill="#c0c0c8" />
            <path d="M13 12v42M25 12v42M37 12v42" stroke="#c8c8cf" strokeWidth="1.500" />
          </svg>
        </div>
      </div>
    </div>
  );
}

export default function App() {
  return (
    <div className="relative h-[1800px] w-[2880px] overflow-hidden bg-[#1e1a30]">
      <MenuBar />
      <div className="flex h-[1640px]">
        <div className="w-[2872px] overflow-hidden rounded-b-[22px] rounded-t-[12px] bg-white">
          <TabBar />
          <Toolbar />
          <SiteHeader />
          <div className="flow-root h-[270px] bg-white font-['Lato',sans-serif]">
            <div className="relative ml-[833px] -mt-[30px] flex h-[100px] w-[1197px] items-center rounded-full border-2 border-[#e9ecef] pl-[40px] text-[32px] tracking-[0.4px] text-[#9ca3af]">
              E-mail :
              <div className="absolute bottom-[2px] right-[3px] flex h-[96px] w-[265px] items-center justify-center rounded-full bg-[#3c56cc] text-[34px] font-semibold tracking-[0.6px] text-white">
                Get Started
              </div>
            </div>
          </div>
          <Footer />
        </div>
        <div className="w-[8px] bg-[#0c0c10]" />
      </div>
      <Dock />
      {/* slide-out settings tab floats over the page edge */}
      <div className="absolute left-0 top-[620px] flex h-[82px] w-[72px] items-center rounded-r-full bg-white pl-[12px] shadow-[0_0_12px_rgba(60,72,88,0.15)]">
        <FaCog className="h-[40px] w-[40px] text-[#3c56cc]" />
      </div>
    </div>
  );
}
